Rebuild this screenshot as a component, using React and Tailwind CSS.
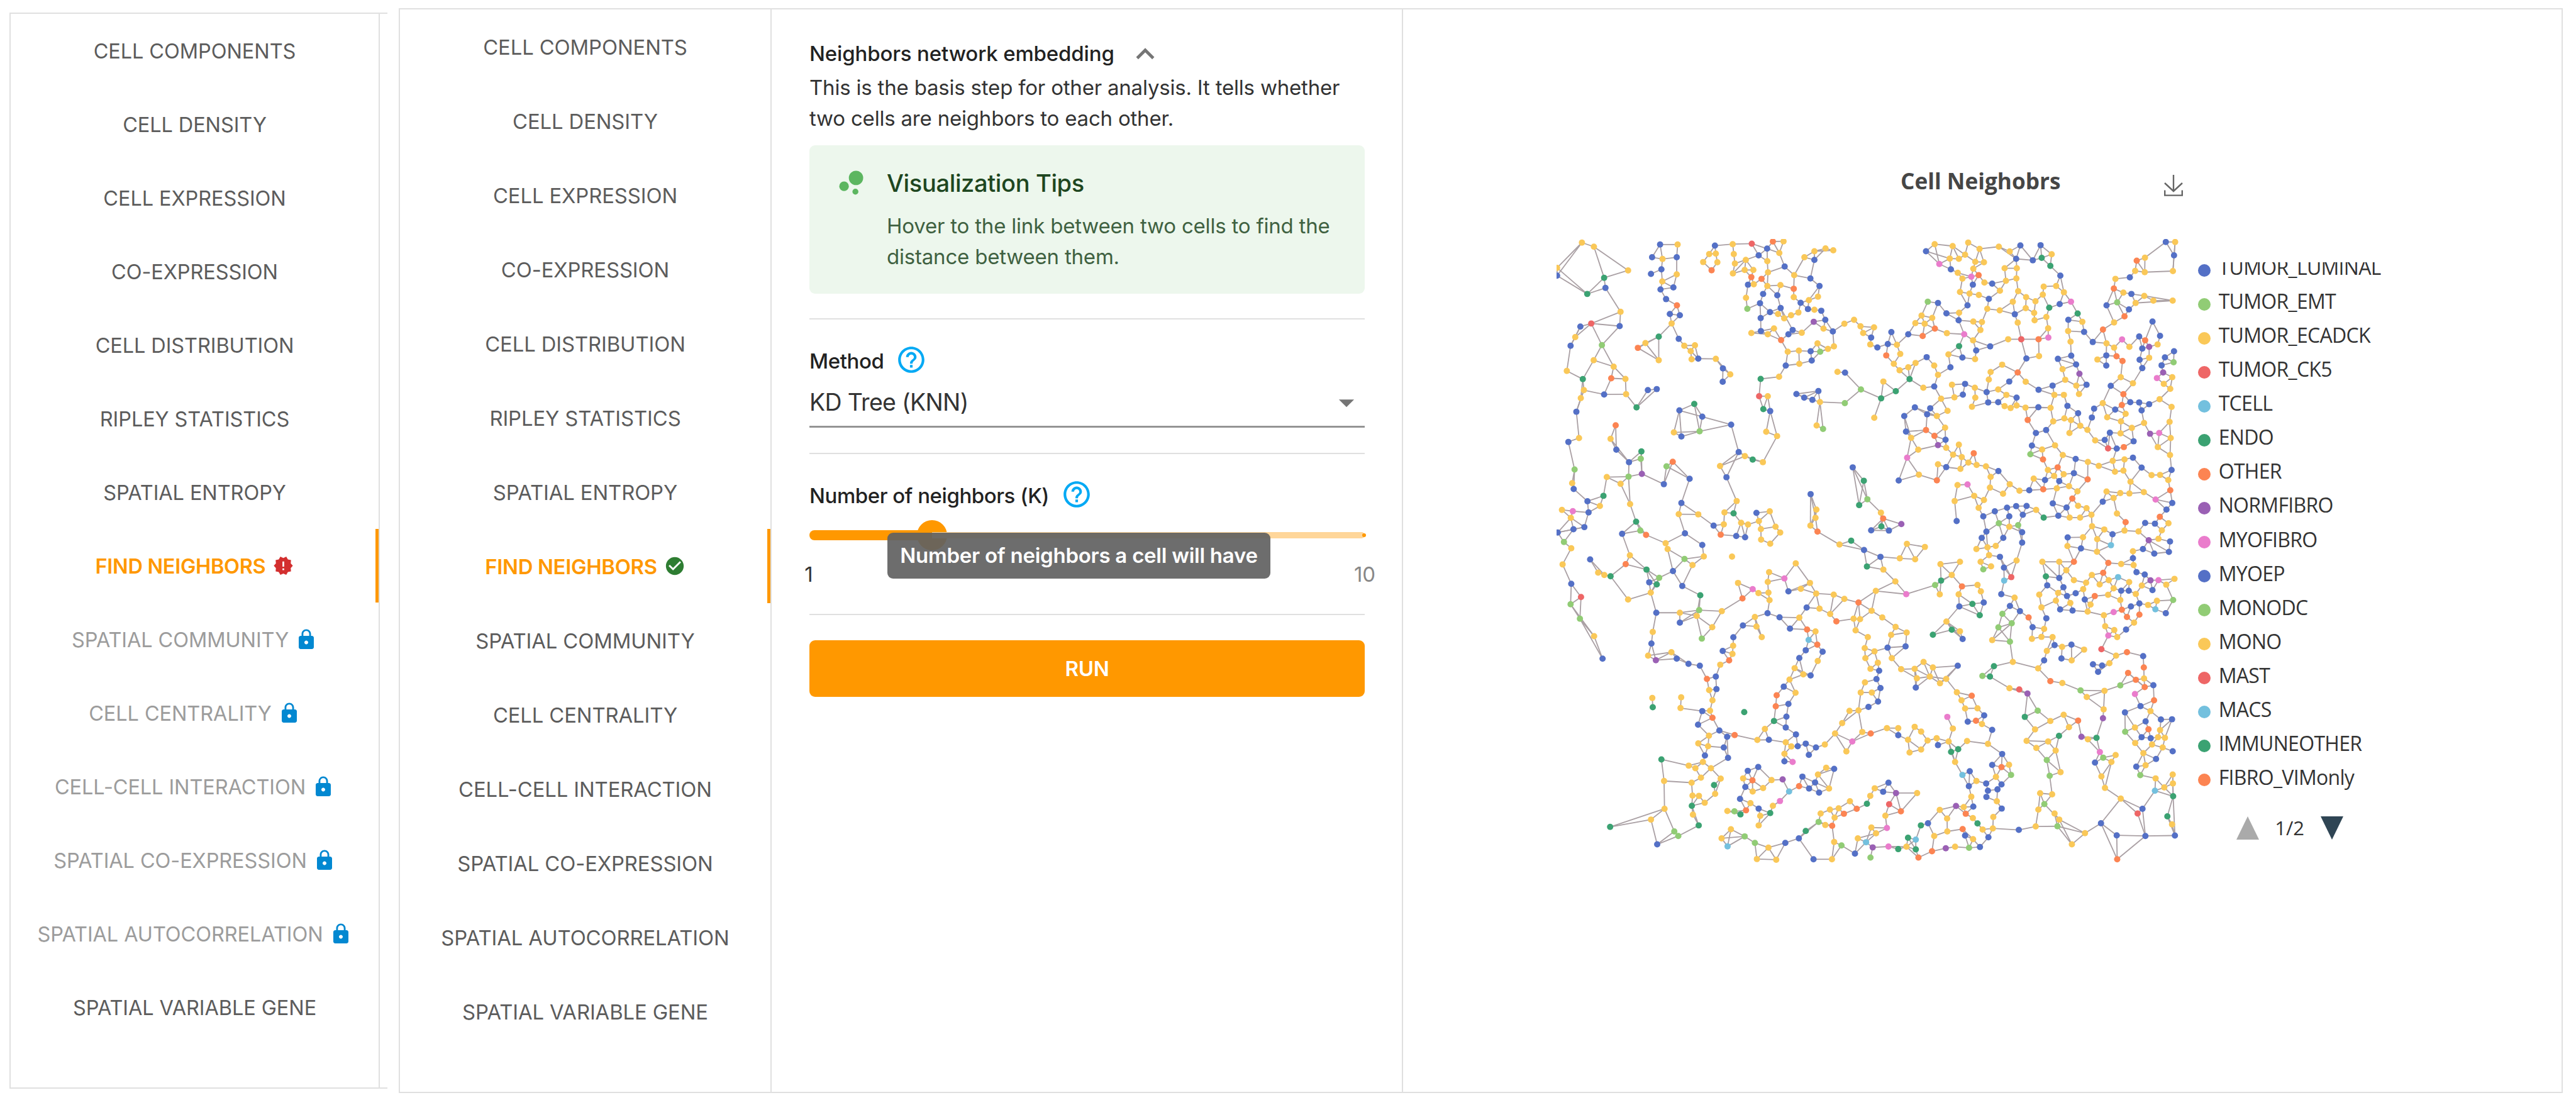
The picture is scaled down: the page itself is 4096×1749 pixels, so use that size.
import React from "react";
import { MdNewReleases, MdCheckCircle, MdLock, MdHelpOutline, MdBubbleChart, MdKeyboardArrowUp, MdArrowDropDown } from "react-icons/md";

const STEPS = [
  "CELL COMPONENTS",
  "CELL DENSITY",
  "CELL EXPRESSION",
  "CO-EXPRESSION",
  "CELL DISTRIBUTION",
  "RIPLEY STATISTICS",
  "SPATIAL ENTROPY",
  "FIND NEIGHBORS",
  "SPATIAL COMMUNITY",
  "CELL CENTRALITY",
  "CELL-CELL INTERACTION",
  "SPATIAL CO-EXPRESSION",
  "SPATIAL AUTOCORRELATION",
  "SPATIAL VARIABLE GENE",
];
const ACTIVE = 7;

const PALETTE = {
  b: "#5470c6",
  l: "#91cc75",
  y: "#fac858",
  r: "#ee6666",
  c: "#73c0de",
  g: "#3ba272",
  o: "#fc8452",
  p: "#9a60b4",
  k: "#ea7ccc",
};

const LEGEND = [
  ["TUMOR_LUMINAL", "bg-[#5470c6]"],
  ["TUMOR_EMT", "bg-[#91cc75]"],
  ["TUMOR_ECADCK", "bg-[#fac858]"],
  ["TUMOR_CK5", "bg-[#ee6666]"],
  ["TCELL", "bg-[#73c0de]"],
  ["ENDO", "bg-[#3ba272]"],
  ["OTHER", "bg-[#fc8452]"],
  ["NORMFIBRO", "bg-[#9a60b4]"],
  ["MYOFIBRO", "bg-[#ea7ccc]"],
  ["MYOEP", "bg-[#5470c6]"],
  ["MONODC", "bg-[#91cc75]"],
  ["MONO", "bg-[#fac858]"],
  ["MAST", "bg-[#ee6666]"],
  ["MACS", "bg-[#73c0de]"],
  ["IMMUNEOTHER", "bg-[#3ba272]"],
  ["FIBRO_VIMonly", "bg-[#fc8452]"],
];

/* Cells of the tissue, one tile per quadrant. cells: x,y plus the cell type's colour key.
   paths: chains of linked cells, separated by "|". */
const TILES = [
  {
    x: 3080,
    y: 440,
    cells: `224,109y 278,128y 432,238y 324,272g 330,319b 248,347g 112,226y 112,262b 398,430y 266,484r 217,498b 394,496b 194,547y 173,587b 314,584l 277,654y 367,684y 156,704y 228,742g 356,738o 420,741y 233,793y 219,830y 324,813b 423,812y 470,873g 521,793b 561,788b 199,893b 211,1015y 163,1033b 191,1161l 180,1224y 187,1251b
576,118b 655,118y 540,177b 587,185y 651,177b 582,233b 535,254b 651,256y 586,289y 578,326b 636,317b 603,371b 652,400o 620,440b 665,446b 628,484y 660,555b 570,545g 510,575y 476,597o 570,654y 685,587y 733,585y 714,612y 718,650y 748,647b
823,123b 797,162y 827,160y 770,199y 834,200y 808,237o
903,116y 989,114r 908,162y 913,206y 904,252y 962,189y 957,236y 996,236y 987,269o 1033,277o 972,304b 998,302y 963,365y 969,416l 1020,168b 1058,137b 1084,104o 1132,103y 1113,157y 1059,195y 1137,220b 1062,247y 1180,260y 1059,310y 1118,306y 1178,323o 1040,347b 1104,353b 1178,362y 1026,390b 1119,412b 1071,431b 1107,440y 1135,460y 1166,446y 1199,433y 1029,459b 1030,519b 987,528y 1061,534y 1089,507y 1173,514b 1154,534b 1214,527y 1121,561o 1226,177y 1271,149y 1321,136y 1356,145y 1271,189b 1253,275b 1294,310b 1287,360y 1246,376y 1209,388b 1242,417b 1271,420y 1302,425b 1320,467b 1268,476p 1312,508y 1354,521b 1406,485y
1359,590y 1332,602y 1285,576y 1297,615l 1254,613b 1259,656b 1151,615y 1201,610y 1203,671y 1142,679b 1112,731y 1029,741g 1022,821r 1061,821y 1041,881g 1072,890b 1103,1006y 1054,986y 1039,1127y 993,1115g 958,1099y 930,1080b 846,1145y 875,1197b 896,953b 766,916b 754,984l 730,857g 663,887b 638,989y 672,1008b 827,648y 859,692b 892,720y 858,754b
376,956o 353,1019y 379,1069b 436,1127b 492,1077g 489,1111l 494,1181p 434,1194l 336,1196y 398,1227y 321,1283g 249,1308b 305,1330y 254,1360b 134,1348y 183,1354k 174,1385y 186,1438b 235,1428b 115,1453b 441,1321y 468,1403g 405,1459b 487,1444l 513,1464o 593,1229b 605,1146l 633,1125o 709,1204b 672,1316b 660,1368y 748,1369y 688,1457b 921,1307y 866,1360y 907,1364g 863,1415y 817,1421b 849,1463o 919,1469b 959,1475b 941,1408y 972,1416y 1010,1362b 1070,1355y 1021,1400y 1030,1437y 1096,1426y 1117,1453y
1375,708y 1409,712b 1408,853l 1289,797b 1190,811b 1225,828b 1262,838b 1296,848y 1281,957y 1310,973l 1254,1275b 1280,1347y 1276,1385y 1253,1421y 1285,1449o`,
    paths: `112,226 224,109|112,262 224,109|112,226 248,347|112,262 248,347|224,109 278,128 432,238 324,272 278,128|324,272 248,347 330,319 398,430 394,496 266,484 398,430|266,484 314,584 394,496|266,484 194,547|173,587 156,704 228,742 277,654 367,684 314,584 277,654|367,684 420,741 356,738 367,684|356,738 324,813 233,793|324,813 423,812 420,741|423,812 470,873 521,793|470,873 561,788|233,793 199,893 211,1015 163,1033 191,1161 187,1251|191,1161 180,1224|228,742 219,830|570,545 570,654 476,597|510,575 570,654|476,597 570,545|655,118 576,118 587,185|651,177 651,256|628,484 660,555 685,587
|663,887 766,916 896,953 754,984 730,857|663,887 638,989 754,984 672,1008 663,887|766,916 754,984|766,916 730,857 663,887|896,953 930,1080 846,1145 875,1197 930,1080|958,1099 846,1145|875,1197 921,1307 866,1360|1039,1127 1103,1006 1072,890|1103,1006 1054,986|1029,741 1022,821 1041,881 1061,821|1029,741 1112,731 1142,679 1151,615 1121,561|1142,679 1203,671 1259,656|1359,590 1354,521 1406,485
|376,956 379,1069 436,1127 353,1019 376,956|436,1127 434,1194 336,1196 321,1283 249,1308|434,1194 441,1321 398,1227 336,1196|398,1227 434,1194 494,1181 492,1077 436,1127|489,1111 436,1127|494,1181 593,1229 605,1146 709,1204 633,1125 593,1229|709,1204 672,1316 748,1369 660,1368 688,1457|672,1316 660,1368|441,1321 468,1403 405,1459 487,1444|468,1403 513,1464
|254,1360 235,1428 174,1385|183,1354 254,1360|183,1354 134,1348 174,1385 186,1438|174,1385 115,1453 235,1428|1190,811 1289,797 1296,848|1225,828 1289,797|1296,848 1408,853|1281,957 1296,848 1310,973|1254,1275 1253,1421|1254,1275 1280,1347|1285,1449 1276,1385
|921,1307 907,1364 941,1408 919,1469 959,1475 941,1408|972,1416 959,1475|849,1463 919,1469|1010,1362 1070,1355 1096,1426|1137,220 1113,157 1132,103|1113,157 1084,104 1058,137 1020,168 962,189 904,252|962,189 913,206|957,236 904,252|1062,247 1137,220 1180,260 1226,177|1180,260 1253,275 1271,189|1180,260 1178,323 1118,306 1059,310 1104,353 1118,306|1253,275 1294,310 1287,360|1294,310 1246,376|903,116 989,114|962,189 996,236|1062,247 1059,310 1040,347|1104,353 1119,412 1173,514|1026,390 969,416 963,365 972,304|1026,390 1029,459 1071,431|1029,459 1030,519 1061,534 1121,561 1154,534|1121,561 1089,507|1214,527 1268,476 1320,467|1268,476 1312,508 1354,521|1173,514 1214,527
|1285,1449 1384,1509 1494,1533 1436,1491 1384,1509|1409,712 1480,790 1408,853|513,1464 601,1504 688,1457 766,1511 773,1564|405,1459 440,1559|115,1453 143,1497`,
    cuts: `540,177 582,233|535,254 586,289|603,371 636,317`,
  },
  {
    x: 3720,
    y: 440,
    cells: `16,467y 45,497y 106,502y 57,528y 93,549b 89,581y 121,595b 184,524b 168,579b 209,583y 161,632o 224,625y 195,671y 221,701y 260,687y 293,667y 343,640b 377,679y 394,722y 266,742g 328,782y 377,776b 148,753y 204,798g 47,790l 138,831g 107,921y
340,149b 379,116y 400,208k 447,183y 452,233b 488,184y 460,125y 516,165y 530,109y 581,138y 562,198y 601,200y 553,230y 483,249y 544,267k 577,260o 504,276y 551,304b 603,294y 638,299b 493,338y 536,345y 578,352y 527,400b 623,370b 673,332y 700,286y 616,416y 672,423y 489,434y 487,469b 432,437b 394,389b 348,383l 368,458y 320,447y 292,482y 334,485y 380,508o 325,542o 260,534b 434,529y 512,534k 553,475y 592,477y 585,514y 552,562y 489,589g 441,627y 504,642b 566,609b 561,649y 629,590b 450,687b 710,557y 769,557r 847,557o 891,549k 890,506y 849,635y 792,646b 753,711o 683,675y 631,709y 623,744y 789,754y 847,791b 715,753b
668,128y 717,150y 765,122b 746,184b 821,191b 856,121b 906,163y 861,180g 900,217g 694,228y 749,228y 747,275y 945,262b 870,313y 926,310y 961,339y 866,350y 755,334y 791,362y 731,383y 833,381y 789,413y 740,441b 827,435y 753,480y 829,469y 882,454y 895,411g 942,394b 993,383k 1023,438g 981,467b 1044,476y 980,519y 1052,523b 1091,570b 991,568y 994,633b 934,648b 1016,674b 955,696y 1031,717p 967,745y 1017,772y 1063,768b 1029,811y 910,772b 918,815y 961,815y 977,866b 901,875y 846,872b 788,874y 798,931o 913,938y 881,978b 835,992b 817,1050b 863,1068y 810,1090l 867,1114o 921,1049y 956,1094y 963,924y 993,932y 1025,900b 1035,958y 986,992y 1067,977y 1102,1026y 1087,920b 1097,879b
1137,512o 1187,479y 1234,451o 1153,400b 1186,322o 1193,277y 1201,386l 1229,341y 1265,347b 1254,419b 1284,389y 1323,356y 1364,378y 1451,378y 1258,270b 1282,240y 1289,193o 1326,179y 1325,246y 1452,241y 1420,106b 1462,106y 1457,168b
1153,576y 1187,596y 1198,636o 1225,658o 1152,632b 1152,679b 1112,651y 1223,558k 1256,592y 1217,733y 1172,773b 1272,761y 1229,812o 1222,862o 1260,849b 1300,850b 1345,858b 1311,887b 1392,835y 1440,787y 1411,764y 1449,733y 1380,737k 1408,711p 1401,678b 1416,641b 1457,613b 1455,664l 1360,475b 1327,562o 1300,544b 1394,541b 1383,581y 1345,592p 1314,600b 1345,643y 1302,652b 1314,691b 1446,871y 1437,940y 1322,945y 1349,995p 1390,992k 1384,1057y 1442,1015y 1439,1094y 1446,1163b 1136,853y 1192,883b 1156,919y 1239,903y 1218,938y 1267,968y 1216,993y 1168,990b 1145,1024b 1160,1063r 1199,1064b 1231,1057o 1275,1030b
1014,1112b 1069,1126y 1118,1144y 1181,1121y 1234,1114y 1272,1106b 1191,1171y 1229,1166y 1068,1207o 1311,1152b 1356,1187y 1394,1186y 1431,1210y 1261,1218y 1256,1272y 1215,1270y 1153,1263y 1185,1293y 1136,1310b 1321,1266y 1440,1257o 1374,1300k 1449,1316b 1423,1347b 1393,1380o 1432,1410y 1402,1443y 1371,1412b 1327,1409b 1297,1448y 1234,1444y 1239,1405o 1200,1365y 1180,1461b 1143,1439y 1088,1424y 1085,1371y 1063,1340y 1025,1329y 999,1296o 1022,1262y 984,1238y 973,1337b 987,1384y 1034,1384y 936,1375b 911,1318b 929,1248y 940,1215b 1006,1178b 960,1183y 933,1151o 917,1191y 889,1163y 876,1210b 868,1253o 825,1203y 805,1257b 761,1259y 717,1229y 687,1273y 628,1245y 631,1195y 666,1168b 610,1146y 568,1140y 555,1086o 531,1129y 495,1158y 501,1103y 488,1046y 462,1092y 431,1060y 428,1023b 394,1048p 378,1005o 340,978o 273,1014y 250,985b 305,1069y 255,1106k 308,1185y 217,1212b 389,1211o 394,1137y 431,1150b 426,967y 389,913y 437,889y 345,905b 359,877b 290,873b 242,913b 408,833y 468,826y 457,768y 516,764b 506,814b 560,782y 562,828y 547,870y 613,802b 620,850b 665,790y 665,849b 702,815y 748,828b 694,867y 721,876y 748,864y
482,1233y 527,1230k 469,1307y 478,1400b 557,1283y 601,1302y 577,1339y 598,1378b 650,1355b 705,1338b 746,1331b 793,1330b 836,1348y 870,1384g 776,1371b 715,1378b 668,1410l 715,1426y 755,1419l 773,1452b 612,1449b
10,1151b 60,1213g 39,1326g 76,1299l 137,1361y 147,1388o 139,1425g 93,1443b 173,1444b 229,1414p
978,1476b 1047,1475y 1387,1482y 1111,1484y 591,1478b 688,1478b`,
    paths: `10,1151 39,1326 60,1213 76,1299 10,1151|10,1151 60,1213|39,1326 76,1299|76,1299 137,1361|173,1444 229,1414|93,1443 173,1444|138,831 107,921|148,753 204,798 138,831 148,753|47,790 138,831|204,798 266,742 328,782|266,742 221,701|266,742 260,687|266,742 293,667|377,776 408,833 437,889 389,913 426,967 378,1005|468,826 408,833 359,877|242,913 250,985 340,978 273,1014 242,913|290,873 242,913|290,873 389,913|273,1014 305,1069 394,1048|305,1069 255,1106 308,1185 217,1212|308,1185 389,1211 394,1137 431,1150 495,1158 501,1103|555,1086 568,1140|610,1146 666,1168 717,1229 687,1273 628,1245 631,1195 610,1146|666,1168 631,1195|717,1229 761,1259|825,1203 868,1253 805,1257 825,1203|482,1233 527,1230 557,1283 469,1307 482,1233|469,1307 478,1400|557,1283 577,1339 601,1302 628,1245
|377,776 394,722 450,687 441,627 489,589 504,642 561,649 566,609 629,590 552,562|489,589 512,534 434,529 380,508 325,542 260,534 292,482|441,627 504,642|380,508 368,458 394,389 432,437 487,469 489,434|512,534 487,469|512,534 552,562 566,609|552,562 585,514|629,590 710,557 769,557 792,646 753,711 683,675|769,557 847,557 849,635 792,646|847,557 891,549|847,557 890,506|753,711 789,754 847,791 910,772 967,745 955,696|753,711 715,753 665,790|847,791 918,815|260,534 209,583 184,524|547,870 620,850
|846,872 798,931 788,874 901,875 913,938 881,978 921,1049|798,931 835,992 881,978|835,992 817,1050|918,815 901,875|961,815 977,866 1025,900|977,866 963,924|913,938 963,924|1025,900 1035,958 993,932 986,992 1035,958 1067,977 1102,1026 1160,1063|1067,977 1087,920|1097,879 1136,853 1192,883|1136,853 1156,919 1192,883|1136,853 1172,773 1217,733 1272,761 1229,812 1172,773|1217,733 1225,658|1272,761 1314,691|1314,691 1345,643|1360,475 1327,562
|1091,570 1052,523 980,519|1091,570 1137,512 1187,479 1153,400 1186,322|1153,400 1201,386 1186,322|1187,479 1234,451 1201,386 1254,419|1091,570 1153,576|1284,389 1451,378|1323,356 1451,378|1323,356 1284,389|1325,246 1452,241 1457,168|1452,241 1462,106|1420,106 1457,168|1420,106 1326,179 1325,246 1289,193|945,262 900,217|945,262 926,310|945,262 961,339 993,383 942,394 961,339|895,411 866,350 870,313 926,310|895,411 942,394|993,383 1023,438 981,467|991,568 994,633|934,648 1016,674|934,648 955,696|1031,717 1017,772|1031,717 1063,768 1029,811
|1392,835 1446,871 1437,940 1442,1015 1439,1094 1446,1163|1437,940 1390,992 1384,1057 1439,1094|1349,995 1322,945 1311,887|1349,995 1384,1057|1349,995 1390,992|1322,945 1267,968 1275,1030 1216,993|1267,968 1218,938 1216,993|1267,968 1216,993|1275,1030 1231,1057|1168,990 1216,993|1168,990 1160,1063|1168,990 1199,1064 1181,1121|1345,858 1392,835 1440,787|956,1094 1014,1112 1069,1126 1068,1207|1014,1112 1006,1178 984,1238|956,1094 933,1151|1118,1144 1181,1121|1118,1144 1191,1171|1234,1114 1272,1106 1311,1152 1261,1218 1229,1166|1311,1152 1356,1187|1261,1218 1256,1272|1261,1218 1321,1266 1256,1272|1321,1266 1374,1300 1440,1257 1431,1210|1374,1300 1449,1316 1440,1257|1153,1263 1215,1270|1153,1263 1136,1310 1185,1293 1200,1365 1239,1405 1234,1444 1297,1448 1327,1409|1136,1310 1085,1371 1088,1424 1111,1484 1143,1439 1088,1424|1180,1461 1234,1444|1180,1461 1173,1512|929,1248 911,1318 936,1375 973,1337 999,1296|973,1337 987,1384|936,1375 987,1384 1034,1384 1085,1371
|340,149 447,183 400,208 340,149|379,116 400,208|400,208 452,233|460,125 516,165 530,109 581,138 601,200|516,165 562,198 581,138|668,128 746,184|765,122 821,191 746,184|765,122 717,150|821,191 861,180|821,191 856,121 861,180|856,121 906,163 900,217|694,228 746,184 749,228 747,275 700,286 694,228 749,228|638,299 700,286 673,332|747,275 755,334 731,383 672,423 616,416 623,370|755,334 791,362|731,383 740,441 753,480|504,276 493,338 527,400 536,345 551,304|504,276 544,267|551,304 577,260|527,400 489,434|616,416 592,477|673,332 623,370 578,352|483,249 544,267
|668,1410 650,1355|668,1410 612,1449|668,1410 688,1478 715,1426|715,1378 705,1338|715,1378 715,1426 773,1452|755,1419 776,1371|773,1452 773,1500|776,1371 836,1348 870,1384|598,1378 650,1355|612,1449 617,1522`,
    cuts: "",
  },
  {
    x: 3080,
    y: 1080,
    cells: `143,21l 176,50y 137,125y 176,215b 220,276r 173,310l 215,377l 279,458y 317,562b 261,102b 297,163y 325,174y 353,180g 421,124o 440,83y 515,149g 527,208b 561,218g 572,187l 534,256y 432,288y 601,27y 610,54y 766,35b 773,88y 686,100l 722,128y 634,156b 676,225b 757,268g 752,337l 741,364y 665,349y 665,395b 559,349b 543,438y 537,492b 522,548y 557,569p 627,532y 651,562b 704,586b 755,595b 787,656o 827,645b 797,708y 830,703b 812,755y 801,803y 766,805b 812,836o 747,868b 843,895b 796,919y 878,924b 912,916o 748,955y 792,968y 863,974b 882,1022b 778,1011b 769,1041y 735,1070y 705,1058y 805,1070y 760,1114y 718,1137y 582,1029g 594,1129y 596,1258y 535,1308y 351,1342g 563,1423b 640,1363l 658,1384l 750,1335g 724,1285y 719,1244g 722,1197y 751,1198y 777,1230y 824,1189y 819,1148g 849,1118y 764,469l 811,416y 854,342y 947,283o 927,211y 993,240k 1019,258y 1064,256y 1061,206y 1067,161y 1136,190k 1069,291y 1060,351b 1114,370b 1003,369y 1010,413y 949,408b 1034,462y 906,463b 905,502y 858,526b 902,540y 887,570o 847,590y 541,744y 543,787g 671,741y 668,791y 955,810g 900,89y 1187,120y 1031,10y 1072,29y
1154,250b 1210,238y 1251,211y 1279,260y 1358,265y 1406,285y 1236,325b 1294,330y 1342,355y 1370,389o 1203,372y 1161,423b 1238,427o 1276,436y 1245,475c 1284,497o 1232,523b 1308,530b 1203,559b 1286,573y 1182,606y 1221,635y 1254,640b 1159,659y 1133,692b 1186,720y 1101,732o 1097,783o 1154,772b 1145,831b 1089,851g 1142,881b 1048,888y 1014,939y 1066,938b 1188,913b 1142,950y 1167,969y 1196,968b 1136,1003y 1136,1038b 1173,1041k 1232,956b 1278,974b 1246,1008b 1318,960y 1364,909y 1396,861y 1429,804y 1415,992y
1018,1064b 971,1082b 950,1117y 992,1126o 960,1157b 993,1178y 1040,1162y 1078,1125y 1128,1122p 1157,1178c 1202,1153o 1217,1109b 1274,1136b 1247,1164b 1292,1183b 1287,1099y 1324,1068y 1360,1073b 1337,1164y 1116,1222k 1084,1244y 1072,1278g 1027,1291y 1020,1257b 1020,1335y 983,1232y 936,1212b 963,1265o 938,1284g 911,1270l 879,1268y 895,1353y 853,1395y 880,1432c 957,1386l 1003,1416l 1064,1438y 1012,1491y 1099,1494y 1140,1416b 1201,1395b 1232,1361g 1290,1319l 1299,1280y 1341,1262y 1380,1256y 1362,1299y 1320,1333y 1351,1337o 1404,1281o 1431,1223y 1360,1412y 1393,1428l 1350,1492y 1267,1492b 1384,33y`,
    paths: `143,21 176,50 137,125 176,215 220,276 215,377 173,310 176,215|173,310 220,276|173,310 279,458 317,562 215,377 279,458|261,102 297,163|261,102 325,174 353,180|353,180 421,124 440,83 515,149 421,124|353,180 432,288 534,256 559,349|515,149 572,187 534,256|515,149 561,218 527,208|572,187 634,156 610,54|634,156 686,100 610,54|686,100 773,88 722,128 686,100|722,128 676,225 634,156|676,225 757,268 752,337|757,268 741,364|559,349 665,349 752,337 854,342 811,416 741,364 764,469 811,416|665,349 741,364 665,395 752,337|559,349 543,438 537,492 522,548 627,532 557,569 651,562|537,492 557,569|627,532 704,586 651,562|854,342 947,283 927,211 993,240 947,283
|796,919 747,868 812,836|766,805 747,868|766,805 812,836|796,919 843,895|792,968 863,974|878,924 882,1022 863,974|878,924 863,974|882,1022 805,1070|748,955 796,919 792,968|748,955 778,1011|912,916 1014,939 1048,888 1066,938 1142,950|1014,939 1066,938|1048,888 1089,851 1145,831|1089,851 1097,783 1101,732|1097,783 1154,772 1186,720 1133,692|1089,851 1142,881 1188,913 1196,968|1188,913 1142,950
|705,1058 582,1029 594,1129 718,1137 722,1197|594,1129 596,1258 351,1342 535,1308 596,1258 640,1363 563,1423 535,1308|563,1423 658,1384 750,1335 724,1285|750,1335 719,1244|760,1114 805,1070|760,1114 735,1070|777,1230 824,1189 849,1118|819,1148 824,1189
|1018,1064 1078,1125 1040,1162 992,1126|1018,1064 992,1126 971,1082|992,1126 993,1178|1078,1125 1128,1122 1157,1178 1202,1153 1217,1109|1157,1178 1116,1222 1084,1244 1072,1278 1020,1335|960,1157 936,1212 983,1232 1020,1257 1072,1278|936,1212 963,1265|1217,1109 1274,1136|1217,1109 1247,1164|1287,1099 1337,1164 1360,1073 1287,1099|895,1353 957,1386 853,1395|880,1432 957,1386|895,1353 880,1432|957,1386 1003,1416 1064,1438 1140,1416 1099,1494 1012,1491 1003,1416|1064,1438 1012,1491|1064,1438 1099,1494|1140,1416 1201,1395 1232,1361 1290,1319|1201,1395 1290,1319|1351,1337 1360,1412 1350,1492 1267,1492|1393,1428 1350,1492|1393,1428 1453,1465
|1060,351 1069,291|1060,351 1003,369|1060,351 1114,370 1203,372 1161,423 1238,427 1203,372 1236,325 1279,260|1114,370 1161,423|1236,325 1294,330 1279,260 1358,265 1342,355 1294,330|1406,285 1342,355|1406,285 1470,302 1528,340|1470,302 1448,377|1470,302 1477,379|949,408 1010,413 1034,462|949,408 1003,369|949,408 906,463|1067,161 1136,190 1061,206|1136,190 1154,250 1251,211|1154,250 1210,238|1308,530 1284,497 1276,436|1308,530 1286,573 1254,640|1203,559 1182,606|1203,559 1221,635|1182,606 1254,640|1159,659 1186,720|1159,659 1221,635|787,656 827,645 830,703|755,595 787,656|1318,960 1364,909 1396,861 1469,802|1364,909 1415,992 1441,946 1364,909|1396,861 1429,804|1232,956 1246,1008 1278,974|541,744 543,787|671,741 668,791`,
    cuts: `541,744 671,741|543,787 668,791|541,744 668,791|543,787 671,741|543,787 522,548`,
  },
  {
    x: 3720,
    y: 1080,
    cells: `3,15g 61,58b 74,135g 135,90b 148,149y 222,97y 254,30y 335,44y 291,101y 202,204y 114,248y 251,263k 381,221l 408,200g 402,264y 405,124y 493,113y 456,174y 502,227o 572,220y 587,250y 487,264y 490,320b 549,308g 600,302b 582,361g 432,390y 371,451g 456,428g 493,435y 505,471b
36,302o 95,340y 14,377y 43,379y 23,431y 143,371y 203,415y 253,441y 183,452y 167,511b 248,505b 186,560y 78,462y 64,513y 108,528y 67,560y 123,581y 90,609y 129,618b 117,657b 135,698b 65,672y 46,719y 96,719y 124,761b 81,786b 36,802y 53,902y 91,909o 8,946k 164,884y 215,884y 215,917b 289,878y 318,900y 259,938y 266,997y 318,983y 347,942y 388,931y 394,963b 442,946y 461,886y 436,832k 485,982g 453,994g 471,1041y 525,944y 619,957y 638,892b 592,865y 565,850o 528,854b 602,825b 572,792y 516,793y 500,755y 546,734o 479,718y 431,656y 403,676y 357,645y 371,603y 329,577y 289,609y 299,653y 294,696b 228,611y 483,595b
567,54y 617,46y 654,39y 624,82y 586,113y 633,134y 598,148l 673,90b 691,140b 724,184r 692,200c 748,107y 773,24b 679,263b 739,279y 718,318b 763,342b 684,354l 726,398l 666,417l 638,476y 718,483l 802,371o 820,416b 872,424y 817,470y 860,461y 910,462y 919,499b 953,507y 995,497b 1052,520y 996,570y 950,561b 884,526y 872,570b 845,607y 731,577y 646,597g 628,645g 594,642l 716,699y 760,705r 797,724p 843,803l 785,832g 900,851y 831,890y 960,822y 1025,849o 984,880y 939,920g 890,946y 793,943y 837,976y 924,988y 884,1032l 946,1088y 897,1105l 908,1191y 854,1186y 873,1236l 846,1262y 834,1340y 919,1280y 940,1308y 932,1339l 997,1423y 1056,1371y 1128,1325b 1199,1381b 1328,1384b 1461,1382b 1201,1492o 1217,1211y 1315,1258b 1293,1280r 1146,1161y 1130,1108y 1101,1044b 1175,1041y 1194,1009y 1138,1021l 1123,995k 1108,929g 1069,936y 1040,924p 900,666o 954,675y 1036,709l 1064,740y 1144,711y 1140,797y 1137,838p 1215,686l 1250,628o 1285,660o 1322,654y 1321,603o 1318,550b 1245,532o 1196,548y 1166,583y 1133,594b 1092,588b 1115,623b 1130,518r 1325,694o 1364,685b 1367,755o 1306,782b 1281,726k 1351,805y 1329,853b 1281,881y 1236,811b 1237,901l 1282,953y 1311,926b 1342,889o 1352,931b 1385,926y 1394,893y 1398,844b 1448,843b 1416,929y 1358,960y 1406,974y 1451,991b 1319,1000y 1376,1027b 1329,1056y 1287,1063b 1305,1102l 1374,1117y 1371,1174c 1413,1159y 1452,1141y 1451,1099y 1453,1200g 1427,1293g 1448,1330y
864,113y 880,181g 886,222b 850,265y 860,324y 882,375b 925,293y 935,257y 959,231b 940,188b 940,113y 1006,113o 972,152y 1006,198y 1061,210y 1048,240y 1014,259b 975,272b 990,304y 944,334b 1000,339b 1068,344y 1055,288b 1081,311y 1100,272o 1160,266y 1185,236y 1163,198y 1122,218y 1087,174y 1138,164o 1161,118o 1219,123y 1275,128y 1272,96b 1272,64y 1317,54b 1343,13p 1368,75b 1434,67b 1439,19b 977,40y 1038,51b 1110,66y 1173,36c 1205,184c 1288,161b 1325,172b 1255,207y 1253,247b 1219,247b 1215,290y 1285,262y 1312,223y 1351,199p 1387,198k 1459,192y 1422,219y 1453,290l 1360,244b 1380,294y 1373,333c 1420,351b 1340,313y 1301,306b 1263,320b 1222,335o 1185,346k 1245,369o 1301,358o 1277,395y 1241,427b 1188,429y 1201,462y 1161,455k 1147,412y 1141,361y
504,1101c 537,1084b 533,1153b 567,1129y 611,1141b 619,1174b 612,1203b 662,1168b 680,1145b 655,1110y 680,1065o 714,1054y 638,1055b 683,1004b 723,1101l 659,1223y 681,1257b 643,1296y 641,1349y 595,1354y 621,1390b 583,1435b 552,1399y 516,1382b 534,1439l 505,1352o 436,1363y 377,1384y 435,1303y 402,1263y 475,1245p 510,1250y 553,1248b 544,1202y 519,1281o 551,1301y 572,1326g 349,1325b 317,1335g 367,1455o 429,1441p 471,1434y 306,1484o 252,1434y 294,1446g 294,1401c 259,1392g 215,1445g 171,1433k 100,1437p 90,1484l 70,1413c 20,1466b 33,1395y 115,1372y 94,1345y 164,1347k 157,1290y 174,1237r 227,1270o 205,1185p 300,1185y 171,1137b 147,1179b 109,1163y 89,1198y 74,1235g 28,1258o 758,1356b`,
    paths: `3,15 61,58 74,135 135,90 61,58|148,149 74,135|148,149 135,90 222,97 254,30 335,44 291,101 254,30|222,97 291,101|148,149 202,204 114,248 251,263 202,204|251,263 381,221|114,248 95,340 143,371 203,415 253,441 248,505 167,511 183,452|405,124 408,200|405,124 493,113 456,174 405,124|408,200 456,174 502,227 572,220|456,174 381,221|408,200 402,264|487,264 502,227|490,320 549,308 600,302 582,361 549,308|490,320 582,361|490,320 432,390 371,451|432,390 505,471 493,435 432,390|456,428 505,471|587,250 600,302|487,264 549,308|487,264 490,320|36,302 14,377|36,302 43,379|36,302 95,340|23,431 14,377|183,452 253,441|248,505 186,560 228,611 289,609|167,511 186,560|108,528 167,511|228,611 299,653 357,645 289,609|357,645 294,696 299,653|294,696 289,609|329,577 357,645|371,603 403,676|329,577 371,603 483,595 431,656 403,676 357,645 371,603|483,595 403,676|431,656 479,718 546,734 500,755|36,802 46,719 96,719|36,802 53,902 91,909 164,884|8,946 53,902|91,909 8,946|36,802 81,786
|259,938 266,997 318,983 259,938|388,931 347,942 318,983|289,878 259,938|164,884 215,917|436,832 461,886 442,946 485,982 525,944 619,957 638,892 592,865|485,982 471,1041 442,946|442,946 388,931|471,1041 504,1101|537,1084 533,1153 504,1101|537,1084 567,1129|646,597 731,577 845,607 872,570|845,607 900,666|646,597 594,642|628,645 716,699|797,724 785,832 831,890 900,851 843,803 797,724|785,832 843,803|900,851 960,822 984,880 939,920|960,822 1025,849 984,880|831,890 793,943 890,946 837,976 793,943|837,976 884,1032 924,988 890,946|939,920 924,988|939,920 890,946|884,1032 946,1088 924,988|884,1032 897,1105 946,1088|897,1105 908,1191 854,1186 846,1262 834,1340 932,1339 1056,1371 997,1423 940,1308|940,1308 1056,1371|932,1339 997,1423|854,1186 873,1236 908,1191|873,1236 846,1262|873,1236 940,1308|834,1340 758,1356 641,1349|1056,1371 1128,1325 1217,1211 1315,1258 1328,1384 1201,1492 1128,1325 1199,1381 1328,1384 1461,1382|1199,1381 1201,1492|1217,1211 1293,1280 1328,1384|1217,1211 1146,1161 1175,1041 1130,1108 1146,1161|1130,1108 1101,1044 1123,995|1138,1021 1175,1041 1194,1009|1315,1258 1371,1174 1453,1200 1451,1099|1371,1174 1374,1117 1413,1159 1371,1174|1413,1159 1452,1141|1453,1200 1427,1293 1461,1382 1453,1200|1305,1102 1374,1117
|1025,849 1040,924 1108,929 1123,995 1069,936|954,675 1036,709 1144,711 1215,686 1250,628|1036,709 1064,740 1144,711 1140,797 1064,740|1140,797 1137,838|1215,686 1285,660 1250,628 1325,694|1318,550 1321,603 1322,654 1325,694|1245,532 1318,550|1196,548 1130,518 1161,455|1322,654 1364,685 1367,755 1306,782|1367,755 1351,805 1398,844 1448,843 1394,893|1448,843 1416,929|1351,805 1306,782 1236,811 1237,901 1281,881 1236,811|1281,726 1306,782|1237,901 1282,953 1319,1000 1376,1027 1329,1056 1319,1000 1287,1063|1406,974 1451,991|1406,974 1376,1027|1282,953 1311,926|1287,1063 1305,1102
|638,476 718,483 726,398 638,476 666,417 718,483|684,354 726,398 763,342|684,354 718,318|684,354 666,417|679,263 739,279|679,263 692,200 724,184|673,90 724,184 748,107 773,24|691,140 724,184|763,342 802,371 820,416 872,424|817,470 820,416|860,461 872,424|882,375 872,424|882,375 860,324 925,293|850,265 860,324|850,265 886,222 935,257|864,113 940,188 880,181 864,113|880,181 886,222|940,113 940,188|940,113 1006,113 977,40|1006,113 1038,51 1110,66 1173,36|1006,113 972,152|977,40 1038,51|1110,8 1110,66|910,462 884,526 872,570|995,497 996,570 1052,520 995,497|950,561 996,570|1453,290 1422,219 1459,192|1453,290 1380,294|1453,290 1420,351 1373,333|1068,344 1055,288|1068,344 1000,339|1068,344 1141,361 1185,346|1100,272 1160,266 1185,236|1387,198 1459,192|1343,13 1317,54|1343,13 1368,75|1343,13 1434,67|1439,19 1387,6|1434,67 1439,19|1434,67 1368,75
|638,1055 683,1004 714,1054 723,1101 680,1145|683,1004 680,1065|638,1055 655,1110|659,1223 681,1257 643,1296 641,1349 621,1390 583,1435 534,1439|552,1399 583,1435|533,1153 544,1202 553,1248|544,1202 510,1250|510,1250 475,1245 402,1263 435,1303 475,1245|402,1263 349,1325 377,1384 436,1363 435,1303|436,1363 505,1352|377,1384 367,1455 306,1484 252,1434|367,1455 429,1441 471,1434|553,1248 519,1281|252,1434 171,1433 100,1437 90,1484|70,1413 20,1466 33,1395 115,1372|70,1413 94,1345 164,1347 157,1290 227,1270 174,1237|164,1347 115,1372|205,1185 227,1270 300,1185 205,1185 171,1137 109,1163|205,1185 147,1179|205,1185 174,1237|109,1163 89,1198 74,1235 28,1258|516,1382 552,1399|552,1399 534,1439|294,1401 252,1434|259,1392 294,1446|505,1352 516,1382`,
    cuts: "",
  },
];

const UNIT_X = 2.24;
const UNIT_Y = 2.306;

const place = (tile, pair) => {
  const [x, y] = pair.split(",").map(Number);
  return { x: tile.x + x / UNIT_X, y: tile.y + y / UNIT_Y };
};

const CELLS = TILES.flatMap((tile) =>
  tile.cells
    .trim()
    .split(/\s+/)
    .map((item) => ({ ...place(tile, item.slice(0, -1)), type: item.slice(-1) }))
);

const closest = (point) => {
  let best = 0;
  let min = Infinity;
  CELLS.forEach((cell, i) => {
    const d = Math.hypot(cell.x - point.x, cell.y - point.y);
    if (d < min) {
      min = d;
      best = i;
    }
  });
  return best;
};

const keyOf = (a, b) => (a < b ? `${a}-${b}` : `${b}-${a}`);

function readPaths(field) {
  const keys = [];
  TILES.forEach((tile) =>
    tile[field].split("|").filter(Boolean).forEach((path) => {
      const stops = path.trim().split(/\s+/).map((pair) => closest(place(tile, pair)));
      stops.slice(1).forEach((stop, i) => stop !== stops[i] && keys.push(keyOf(stops[i], stop)));
    })
  );
  return keys;
}

/* Listed chains plus the links between close cells, ranked by each cell's sorted neighbours. */
function buildLinks() {
  const near = CELLS.map((a, i) =>
    CELLS.map((b, j) => [j, Math.hypot(a.x - b.x, a.y - b.y)])
      .filter(([j]) => j !== i)
      .sort((p, q) => p[1] - q[1])
      .slice(0, 5)
      .map(([j]) => j)
  );
  const links = new Set(readPaths("paths"));
  near.forEach((list, i) =>
    list.forEach((j, r) => {
      const back = near[j].indexOf(i);
      if (i > j || back < 0) return;
      if (Math.min(r, back) <= 1 || Math.max(r, back) <= 2) links.add(keyOf(i, j));
    })
  );
  readPaths("cuts").forEach((key) => links.delete(key));
  return [...links].map((key) => key.split("-").map(Number));
}
const LINKS = buildLinks();

function StepIcon({ index, locked, done }) {
  if (index === ACTIVE) {
    return done ? (
      <MdCheckCircle className="ml-[11px] size-[34px] text-[#2e7d32]" />
    ) : (
      <MdNewReleases className="ml-[12px] size-[33px] text-[#d32f2f]" />
    );
  }
  return locked ? <MdLock className="ml-[10px] size-[36px] text-[#0288d1]" /> : null;
}

function Stepper({ done, className, row }) {
  return (
    <ul className={className}>
      {STEPS.map((label, i) => {
        const locked = !done && i > ACTIVE && i < 13;
        const tone = i === ACTIVE ? "border-[#ff9800] text-[#ff9800] font-semibold tracking-[-0.3px]" : locked ? "border-transparent text-[#9c9c9c] tracking-[-0.1px]" : "border-transparent text-[#5c5c5c] tracking-[-0.1px]";
        return (
          <li key={label} className={`flex items-center justify-center border-r-[5px] pl-[5px] ${row} ${tone}`}>
            <span className="mt-[4px] whitespace-nowrap">{label}</span>
            <StepIcon index={i} locked={locked} done={done} />
          </li>
        );
      })}
    </ul>
  );
}

function Rule({ className }) {
  return <div className={`h-[2px] bg-[#e0e0e0] ${className}`} />;
}

function Settings() {
  return (
    <section className="w-[1004px] shrink-0 border-r-2 border-[#e0e0e0] pl-[60px] pr-[59px] pt-[46px] text-[33px] text-[#333333]">
      <div className="flex h-[50px] items-center font-medium text-[#222222]">
        <span className="whitespace-nowrap tracking-[-0.15px]">Neighbors network embedding</span>
        <MdKeyboardArrowUp className="ml-[20px] size-[58px] text-[#757575]" />
      </div>
      <p className="mt-[4px] whitespace-nowrap leading-[49.4px] tracking-[-0.2px]">
        This is the basis step for other analysis. It tells whether
        <br />
        two cells are neighbors to each other.
      </p>
      <div className="mt-[17px] flex h-[236px] rounded-[9px] bg-[#edf7ed] pl-[38px] text-[#1e4620]">
        <MdBubbleChart className="mt-[31px] size-[57px] text-[#5cb660]" />
        <div className="ml-[28px] pt-[31px]">
          <h3 className="whitespace-nowrap text-[38px] font-medium leading-[58px] tracking-[-0.35px]">Visualization Tips</h3>
          <p className="mt-[15px] whitespace-nowrap leading-[49.4px] tracking-[-0.2px] text-[#3f6141]">
            Hover to the link between two cells to find the
            <br />
            distance between them.
          </p>
        </div>
      </div>
      <Rule className="mt-[39px]" />
      <div className="mt-[42px] flex h-[50px] items-center font-medium text-[#222222]">
        <span className="tracking-[-0.4px]">Method</span>
        <MdHelpOutline className="mb-[5px] ml-[18px] size-[50px] text-[#03a9f4]" />
      </div>
      <div className="mt-[13px] flex h-[67px] items-center justify-between border-b-[3px] border-[#949494] pb-[9px] text-[37.5px] tracking-[-0.7px]">
        <span>KD Tree (KNN)</span>
        <MdArrowDropDown className="size-[58px] text-[#757575]" />
      </div>
      <Rule className="mt-[40px]" />
      <div className="mt-[42px] flex h-[50px] items-center font-medium text-[#222222]">
        <span className="tracking-[-0.45px]">Number of neighbors (K)</span>
        <MdHelpOutline className="mb-[5px] ml-[19px] size-[50px] text-[#03a9f4]" />
      </div>
      <div className="relative mt-[13px] flex h-[48px] items-center">
        <div className="h-[16px] w-[195px] rounded-l-full bg-[#ff9800]" />
        <div className="-mx-[24px] size-[48px] shrink-0 rounded-full bg-[#ff9800]" />
        <div className="flex h-[10px] flex-1 items-center justify-end rounded-r-full bg-[#ffd699]">
          <span className="-mr-[2px] size-[6px] rounded-full bg-[#ff9800]" />
        </div>
        <div className="absolute left-[124px] top-[20px] flex h-[73px] w-[609px] items-center justify-center rounded-[9px] bg-[#616161]/92 font-semibold text-white">
          <span className="whitespace-nowrap tracking-[-0.25px]">Number of neighbors a cell will have</span>
        </div>
      </div>
      <div className="-mx-[20px] mt-[13px] flex h-[50px] justify-between leading-[50px]">
        <span className="w-[38px] text-center">1</span>
        <span className="w-[40px] text-center text-[#888888]">10</span>
      </div>
      <Rule className="mt-[38px]" />
      <button className="mt-[40px] flex h-[90px] w-full items-center justify-center rounded-[9px] bg-[#ff9800] pt-[2px] font-semibold tracking-[-0.3px] text-white">
        RUN
      </button>
    </section>
  );
}

function Network() {
  return (
    <svg viewBox="3129 480 1264 1260" className="h-[996.5px] w-[999.7px] shrink-0">
      <g stroke="#aaa0a4" strokeWidth="2.3">
        {LINKS.map(([a, b]) => (
          <line key={`${a}-${b}`} x1={CELLS[a].x} y1={CELLS[a].y} x2={CELLS[b].x} y2={CELLS[b].y} />
        ))}
      </g>
      {CELLS.map((cell, i) => (
        <circle key={i} cx={cell.x} cy={cell.y} r="6.3" fill={PALETTE[cell.type]} />
      ))}
    </svg>
  );
}

function Chart() {
  return (
    <section className="flex-1 pl-[244px] pt-[232px] font-['Open_Sans',sans-serif] text-[#333333]">
      <div className="flex h-[80px] items-center pl-[547px]">
        <h2 className="whitespace-nowrap text-[35.2px] font-bold text-[#464646]">Cell Neighobrs</h2>
        <svg viewBox="0 0 30 34" className="ml-[164px] mt-[16px] h-[34px] w-[30px]" fill="none" stroke="#666666" strokeWidth="2.4">
          <path d="M15 0V26M1 13L15 26L29 13M1.2 24.5V32.6H28.8V24.5" />
        </svg>
      </div>
      <div className="mt-[53px] flex">
        <Network />
        <div className="ml-[20px] pt-[22px]">
          <ul>
            {LEGEND.map(([name, dot], i) => (
              <li key={name} className="flex h-[54.07px] items-center">
                <span className={`mt-[1px] size-[20px] rounded-full ${dot}`} />
                <span className={`-mt-[8px] ml-[13px] h-[46px] whitespace-nowrap text-[32px] leading-[46px] tracking-[-0.7px] ${i === 0 ? "[clip-path:inset(15px_0_0_0)]" : ""}`}>{name}</span>
              </li>
            ))}
          </ul>
          <div className="mt-[27px] flex items-center pl-[61px]">
            <svg viewBox="0 0 36 37" className="h-[37px] w-[36px]"><path d="M18 0L36 37H0Z" fill="#aaaaaa" /></svg>
            <span className="w-[98px] text-center text-[31px] leading-[44px]">1/2</span>
            <svg viewBox="0 0 36 37" className="h-[37px] w-[36px]"><path d="M0 0H36L18 37Z" fill="#2f4554" /></svg>
          </div>
        </div>
      </div>
    </section>
  );
}

export default function App() {
  return (
    <div className="flex h-[1749px] w-[4096px] overflow-hidden bg-white pl-[15px] font-['Inter',sans-serif]">
      <div className="mt-[20px] flex h-[1711px] w-[601px] border-y-2 border-l-2 border-[#e0e0e0]">
        <Stepper row="h-[117px]" className="w-[587px] border-r-2 border-[#e0e0e0] text-[32.5px]" />
      </div>
      <div className="ml-[18px] mt-[13px] flex h-[1725px] w-[3441px] border-2 border-[#e0e0e0]">
        <Stepper done row="h-[117.94px]" className="w-[591px] shrink-0 border-r-2 border-[#e0e0e0] text-[32.8px]" />
        <Settings />
        <Chart />
      </div>
    </div>
  );
}
